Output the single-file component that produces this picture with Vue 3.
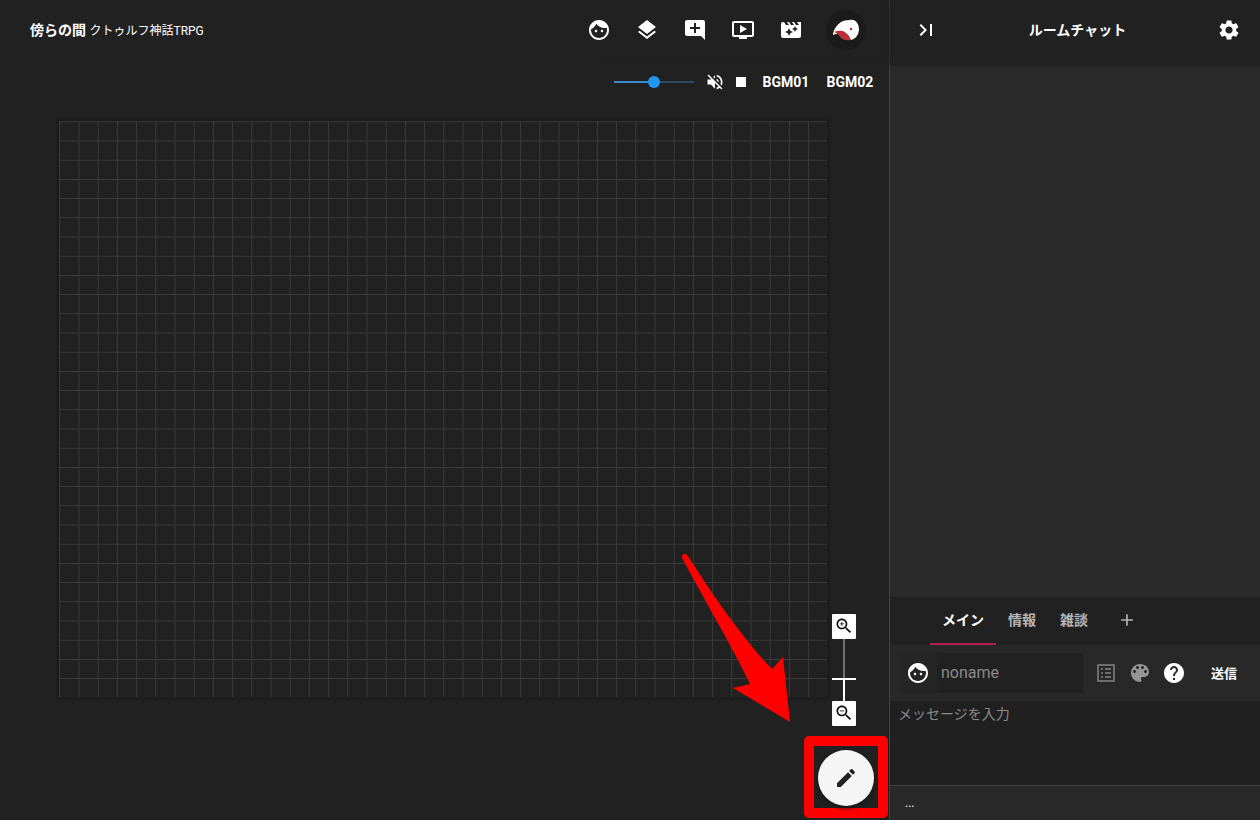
<script setup>
import { ref } from 'vue'

const face =
  'M9 11.75c-.69 0-1.25.56-1.25 1.25s.56 1.25 1.25 1.25 1.25-.56 1.25-1.25-.56-1.25-1.25-1.25zm6 0c-.69 0-1.25.56-1.25 1.25s.56 1.25 1.25 1.25 1.25-.56 1.25-1.25-.56-1.25-1.25-1.25zM12 2C6.48 2 2 6.48 2 12s4.48 10 10 10 10-4.48 10-10S17.52 2 12 2zm0 18c-4.41 0-8-3.59-8-8 0-.29.02-.58.05-.86 2.36-1.05 4.23-2.98 5.21-5.37C11.07 8.33 14.05 10 17.42 10c.78 0 1.53-.09 2.25-.26.21.71.33 1.47.33 2.26 0 4.41-3.59 8-8 8z'
const magnifier =
  'M15.5 14h-.79l-.28-.27C15.41 12.59 16 11.11 16 9.5 16 5.91 13.09 3 9.5 3S3 5.91 3 9.5 5.91 16 9.5 16c1.61 0 3.09-.59 4.23-1.57l.27.28v.79l5 4.99L20.49 19l-4.99-5zm-6 0C7.01 14 5 11.99 5 9.5S7.01 5 9.5 5 14 7.01 14 9.5 11.99 14 9.5 14z'

const tools = [
  { label: 'キャラクター', path: face },
  { label: 'スクリーンパネル', path: 'M11.99 18.54l-7.37-5.73L3 14.07l9 7 9-7-1.63-1.27-7.38 5.74zM12 16l7.36-5.73L21 9l-9-7-9 7 1.63 1.27L12 16z' },
  { label: 'シナリオテキスト', path: 'M21.99 4c0-1.1-.89-2-1.99-2H4c-1.1 0-2 .9-2 2v12c0 1.1.9 2 2 2h14l4 4-.01-18zM17 11h-4v4h-2v-4H7V9h4V5h2v4h4v2z' },
  { label: 'シーン', path: 'M21 3H3c-1.11 0-2 .89-2 2v12c0 1.1.89 2 2 2h5v2h8v-2h5c1.1 0 1.99-.9 1.99-2L23 5c0-1.11-.9-2-2-2zm0 14H3V5h18v12zm-5-6l-7 4V7z' },
  { label: 'カットイン', path: 'M18 4l2 3h-3l-2-3h-2l2 3h-3l-2-3H8l2 3H7L5 4H4c-1.1 0-1.99.9-1.99 2L2 18c0 1.1.9 2 2 2h16c1.1 0 2-.9 2-2V4h-4zm-6.75 11.25L10 18l-1.25-2.75L6 14l2.75-1.25L10 10l1.25 2.75L14 14l-2.75 1.25zm5.69-3.31L16 14l-.94-2.06L13 11l2.06-.94L16 8l.94 2.06L19 11l-2.06.94z' }
]

const tabs = ['メイン', '情報', '雑談']
const activeTab = ref('メイン')
const volume = ref(50)
const name = ref('')
const message = ref('')
</script>

<template>
  <div class="room">
    <main class="stage">
      <div class="canvas">
        <svg class="board" viewBox="0 0 960 720" aria-hidden="true">
          <line v-for="n in 40" :key="'v' + n" :x1="(n - 1) * 24 + 1" :x2="(n - 1) * 24 + 1" y1="0" y2="720" />
          <line v-for="n in 30" :key="'h' + n" x1="0" x2="960" :y1="(n - 1) * 24 + 1" :y2="(n - 1) * 24 + 1" />
        </svg>
      </div>

      <header class="topbar">
        <h1 class="room-title">傍らの間 <small>クトゥルフ神話TRPG</small></h1>
        <nav class="tools">
          <button v-for="t in tools" :key="t.label" class="icon-button" :aria-label="t.label">
            <svg class="icon" viewBox="0 0 24 24"><path :d="t.path" /></svg>
          </button>
          <button class="avatar" aria-label="アカウント">
            <svg viewBox="0 0 40 40">
              <path fill="#fff" d="M7 25C7 20 11 15 15 12Q18 10 24 10C30 9 33 14 33 20Q32 28 25 30L16 22Z" />
              <path fill="#bd2f38" d="M8 22Q12 20 17 21Q23 24 25 30Q18 31 15 28Q12 23 8 22Z" />
              <circle cx="25" cy="19" r="1.3" fill="#bd2f38" />
            </svg>
          </button>
        </nav>
      </header>

      <section class="music" aria-label="BGM">
        <input v-model="volume" class="volume" type="range" min="0" max="100" aria-label="音量" />
        <button class="small-button mute" aria-label="ミュート">
          <svg class="icon-small" viewBox="0 0 24 24"><path d="M16.5 12c0-1.77-1.02-3.29-2.5-4.03v2.21l2.45 2.45c.03-.2.05-.41.05-.63zm2.5 0c0 .94-.2 1.82-.54 2.64l1.51 1.51C20.63 14.91 21 13.5 21 12c0-4.28-2.99-7.86-7-8.77v2.06c2.89.86 5 3.54 5 6.71zM4.27 3L3 4.27 7.73 9H3v6h4l5 5v-6.73l4.25 4.25c-.67.52-1.42.93-2.25 1.18v2.06c1.38-.31 2.63-.95 3.69-1.81L19.73 21 21 19.73l-9-9L4.27 3zM12 4L9.91 6.09 12 8.18V4z" /></svg>
        </button>
        <button class="small-button" aria-label="停止">
          <svg class="icon-small" viewBox="0 0 24 24"><path d="M6 6h12v12H6z" /></svg>
        </button>
        <button class="track">BGM01</button>
        <button class="track">BGM02</button>
      </section>

      <div class="zoom">
        <button class="zoom-button" aria-label="拡大">
          <svg class="icon-small" viewBox="0 0 24 24"><path :d="magnifier" /><path d="M12 10h-2v2H9v-2H7V9h2V7h1v2h2v1z" /></svg>
        </button>
        <div class="zoom-track"><span class="zoom-rest"></span><span class="zoom-handle"></span><span class="zoom-fill"></span></div>
        <button class="zoom-button" aria-label="縮小">
          <svg class="icon-small" viewBox="0 0 24 24"><path :d="magnifier" /><path d="M7 9h5v1H7z" /></svg>
        </button>
      </div>

      <svg class="arrow" viewBox="0 0 110 170" aria-hidden="true">
        <path d="M2 7C1 4 5 1 8 5C28 37 62 87 92 118L103 106L110 171L53 137L70 133C55 101 29 57 2 7Z" />
      </svg>
      <div class="highlight">
        <button class="fab" aria-label="編集">
          <svg class="icon" viewBox="0 0 24 24"><path d="M3 17.25V21h3.75L17.81 9.94l-3.75-3.75L3 17.25zM20.71 7.04c.39-.39.39-1.02 0-1.41l-2.34-2.34c-.39-.39-1.02-.39-1.41 0l-1.83 1.83 3.75 3.75 1.83-1.83z" /></svg>
        </button>
      </div>
    </main>

    <aside class="chat">
      <header class="chat-header">
        <button class="icon-button" aria-label="閉じる">
          <svg class="icon" viewBox="0 0 24 24"><path d="M5.59 7.41L10.18 12l-4.59 4.59L7 18l6-6-6-6zM16 6h2v12h-2z" /></svg>
        </button>
        <h2 class="chat-title">ルームチャット</h2>
        <button class="icon-button" aria-label="設定">
          <svg class="icon" viewBox="0 0 24 24"><path d="M19.14 12.94c.04-.3.06-.61.06-.94 0-.32-.02-.64-.07-.94l2.03-1.58c.18-.14.23-.41.12-.61l-1.92-3.32c-.12-.22-.37-.29-.59-.22l-2.39.96c-.5-.38-1.03-.7-1.62-.94l-.36-2.54c-.04-.24-.24-.41-.48-.41h-3.84c-.24 0-.43.17-.47.41l-.36 2.54c-.59.24-1.13.57-1.62.94l-2.39-.96c-.22-.08-.47 0-.59.22L2.74 8.87c-.12.21-.08.47.12.61l2.03 1.58c-.05.3-.09.63-.09.94s.02.64.07.94l-2.03 1.58c-.18.14-.23.41-.12.61l1.92 3.32c.12.22.37.29.59.22l2.39-.96c.5.38 1.03.7 1.62.94l.36 2.54c.05.24.24.41.48.41h3.84c.24 0 .44-.17.47-.41l.36-2.54c.59-.24 1.13-.56 1.62-.94l2.39.96c.22.08.47 0 .59-.22l1.92-3.32c.12-.22.07-.47-.12-.61l-2.01-1.58zM12 15.6c-1.98 0-3.6-1.62-3.6-3.6s1.62-3.6 3.6-3.6 3.6 1.62 3.6 3.6-1.62 3.6-3.6 3.6z" /></svg>
        </button>
      </header>

      <div class="log"></div>

      <div class="tabs">
        <button
          v-for="t in tabs"
          :key="t"
          class="tab"
          :class="{ active: t === activeTab }"
          @click="activeTab = t"
        >{{ t }}</button>
        <button class="tab add" aria-label="タブを追加">
          <svg class="icon-small" viewBox="0 0 24 24"><path d="M19 13h-6v6h-2v-6H5v-2h6V5h2v6h6v2z" /></svg>
        </button>
      </div>

      <div class="compose">
        <div class="name-field">
          <button class="face-button" aria-label="キャラクター選択">
            <svg class="icon" viewBox="0 0 24 24"><path :d="face" /></svg>
          </button>
          <input v-model="name" class="name" type="text" placeholder="noname" aria-label="名前" />
        </div>
        <div class="compose-tools">
          <button class="plain dim" aria-label="チャットパレット">
            <svg class="icon" viewBox="0 0 24 24"><path d="M19 5v14H5V5h14m1.1-2H3.9c-.5 0-.9.4-.9.9v16.2c0 .4.4.9.9.9h16.2c.4 0 .9-.5.9-.9V3.9c0-.5-.5-.9-.9-.9zM11 7h6v2h-6V7zm0 4h6v2h-6v-2zm0 4h6v2h-6zM7 7h2v2H7zm0 4h2v2H7zm0 4h2v2H7z" /></svg>
          </button>
          <button class="plain muted" aria-label="文字色">
            <svg class="icon" viewBox="0 0 24 24"><path d="M12 3c-4.97 0-9 4.03-9 9s4.03 9 9 9c.83 0 1.5-.67 1.5-1.5 0-.39-.15-.74-.39-1.01-.23-.26-.38-.61-.38-.99 0-.83.67-1.5 1.5-1.5H16c2.76 0 5-2.24 5-5 0-4.42-4.03-8-9-8zm-5.5 9c-.83 0-1.5-.67-1.5-1.5S5.67 9 6.5 9 8 9.67 8 10.5 7.33 12 6.5 12zm3-4C8.67 8 8 7.33 8 6.5S8.67 5 9.5 5s1.5.67 1.5 1.5S10.33 8 9.5 8zm5 0c-.83 0-1.5-.67-1.5-1.5S13.67 5 14.5 5s1.5.67 1.5 1.5S15.33 8 14.5 8zm3 4c-.83 0-1.5-.67-1.5-1.5S16.67 9 17.5 9s1.5.67 1.5 1.5-.67 1.5-1.5 1.5z" /></svg>
          </button>
          <button class="plain" aria-label="ヘルプ">
            <svg class="icon" viewBox="0 0 24 24"><path d="M12 2C6.48 2 2 6.48 2 12s4.48 10 10 10 10-4.48 10-10S17.52 2 12 2zm1 17h-2v-2h2v2zm2.07-7.75l-.9.92C13.45 12.9 13 13.5 13 15h-2v-.5c0-1.1.45-2.1 1.17-2.83l1.24-1.26c.37-.36.59-.86.59-1.41 0-1.1-.9-2-2-2s-2 .9-2 2H8c0-2.21 1.79-4 4-4s4 1.79 4 4c0 .88-.36 1.68-.93 2.25z" /></svg>
          </button>
        </div>
        <button class="send">送信</button>
      </div>

      <textarea v-model="message" class="message" placeholder="メッセージを入力" aria-label="メッセージ"></textarea>
      <footer class="status">...</footer>
    </aside>
  </div>
</template>

<style>
body {
  background: #212121;
}
</style>

<style scoped>
.room {
  display: flex;
  min-height: 100vh;
  background: #212121;
  color: #fff;
  font-family: Roboto, "Noto Sans CJK JP", sans-serif;
  font-size: 14px;
}
.room * {
  box-sizing: border-box;
}
button {
  display: flex;
  align-items: center;
  justify-content: center;
  padding: 0;
  border: 0;
  background: none;
  color: inherit;
  font: inherit;
  cursor: pointer;
}
svg {
  display: block;
}
.icon {
  width: 24px;
  height: 24px;
  fill: currentColor;
}
.icon-small {
  width: 20px;
  height: 20px;
  fill: currentColor;
}
.icon-button {
  width: 48px;
  height: 48px;
}

.stage {
  position: relative;
  flex: 1;
  min-width: 0;
  overflow: hidden;
}
.canvas {
  position: absolute;
  inset: 0;
  display: flex;
  align-items: center;
  justify-content: center;
  padding: 0 3px 2px 0;
}
.board {
  width: 768px;
  height: 576px;
  flex: none;
  box-shadow: 0 0 0 3px #1d1d1d;
  stroke: #3a3a3a;
  stroke-width: 1.3;
}
.topbar {
  position: relative;
  display: flex;
  align-items: center;
  justify-content: space-between;
  height: 60px;
  padding: 0 23px 0 30px;
}
.room-title {
  margin: 0;
  font-size: 14px;
  font-weight: 700;
  line-height: 20px;
}
.room-title small {
  font-size: 12px;
  font-weight: 400;
}
.tools {
  display: flex;
  align-items: center;
}
.avatar {
  width: 40px;
  height: 40px;
  margin-left: 11px;
  border-radius: 50%;
  background: #1b1b1b;
}
.avatar svg {
  width: 40px;
  height: 40px;
}
.music {
  position: relative;
  display: flex;
  align-items: center;
  width: 291px;
  height: 38px;
  margin-left: auto;
  margin-top: 2px;
  padding: 0 16px;
  border-top: 1px solid #1e1e1e;
}
.volume {
  appearance: none;
  flex: none;
  width: 80px;
  height: 12px;
  margin: 0;
  background: linear-gradient(90deg, #3a8bce 50%, #2b4b62 50%) center / 100% 2px no-repeat;
}
.volume::-webkit-slider-thumb {
  appearance: none;
  width: 12px;
  height: 12px;
  border-radius: 50%;
  background: #2196f3;
}
.small-button {
  flex: none;
  width: 26px;
  height: 26px;
}
.mute {
  margin-left: 8px;
}
.track {
  width: 64px;
  flex: none;
  font-size: 14px;
  font-weight: 700;
}
.zoom {
  position: absolute;
  right: 33px;
  bottom: 94px;
  width: 24px;
}
.zoom-button {
  width: 24px;
  height: 25px;
  padding-bottom: 2px;
  border-radius: 1px;
  background: #fff;
  color: #111;
}
.zoom-track {
  display: flex;
  flex-direction: column;
  align-items: center;
  height: 62px;
}
.zoom-rest {
  height: 39px;
  width: 2px;
  background: #707070;
}
.zoom-handle {
  width: 24px;
  height: 2px;
  background: #fff;
}
.zoom-fill {
  flex: 1;
  width: 2px;
  background: #fff;
}
.arrow {
  position: absolute;
  right: 99px;
  bottom: 99px;
  width: 110px;
  height: 170px;
  overflow: visible;
  fill: #f00;
}
.highlight {
  position: absolute;
  right: 1px;
  bottom: 2px;
  display: flex;
  align-items: flex-end;
  justify-content: center;
  width: 84px;
  height: 82px;
  padding-bottom: 2px;
  border: 10px solid #f00;
  border-radius: 5px;
}
.fab {
  flex: none;
  width: 56px;
  height: 56px;
  border-radius: 50%;
  background: #f5f5f5;
  color: #212121;
  box-shadow: 0 2px 4px #161616;
}

.chat {
  display: flex;
  flex: none;
  flex-direction: column;
  width: 371px;
  border-left: 1px solid #424242;
  background: #2a2a2a;
}
.chat-header {
  display: flex;
  align-items: center;
  justify-content: space-between;
  height: 64px;
  padding: 0 7px 4px 12px;
  background: #212121;
  box-shadow: 0 1px 4px #1a1a1a;
}
.chat-title {
  margin: 0;
  font-size: 14px;
  font-weight: 700;
  line-height: 20px;
}
.log {
  flex: 1;
}
.tabs {
  display: flex;
  height: 48px;
  padding-left: 40px;
  background: #212121;
}
.tab {
  padding: 0 12px 2px;
  border-bottom: 2px solid transparent;
  color: #b5b5b5;
  font-weight: 700;
}
.tab.active {
  border-bottom-color: #b3204f;
  color: #fff;
}
.tab.add {
  width: 54px;
  padding-bottom: 0;
}
.compose {
  display: flex;
  align-items: center;
  height: 56px;
  padding: 0 8px;
  background: #282828;
}
.name-field {
  display: flex;
  flex: 1;
  min-width: 0;
  height: 40px;
  background: #212121;
}
.face-button {
  flex: none;
  width: 39px;
  background: #252525;
}
.name {
  flex: 1;
  min-width: 0;
  padding: 0 4px 2px;
  border: 0;
  outline: 0;
  background: none;
  color: #fff;
  font: inherit;
  font-size: 16px;
}
.name::placeholder,
.message::placeholder {
  color: #8a8a8a;
  opacity: 1;
}
.compose-tools {
  display: flex;
  gap: 10px;
  margin: 0 10px 0 11px;
}
.dim {
  color: #6e6e6e;
}
.muted {
  color: #959595;
}
.send {
  width: 56px;
  height: 36px;
  padding-bottom: 2px;
  font-size: 13px;
  font-weight: 700;
}
.message {
  display: block;
  height: 84px;
  padding: 3px 8px;
  border: 0;
  outline: 0;
  resize: none;
  background: #202020;
  color: #fff;
  font: inherit;
  font-size: 14px;
  line-height: 20px;
}
.status {
  height: 35px;
  padding: 7px 15px;
  border-top: 1px solid #424242;
  background: #282828;
  font-size: 12px;
  line-height: 20px;
}
</style>
